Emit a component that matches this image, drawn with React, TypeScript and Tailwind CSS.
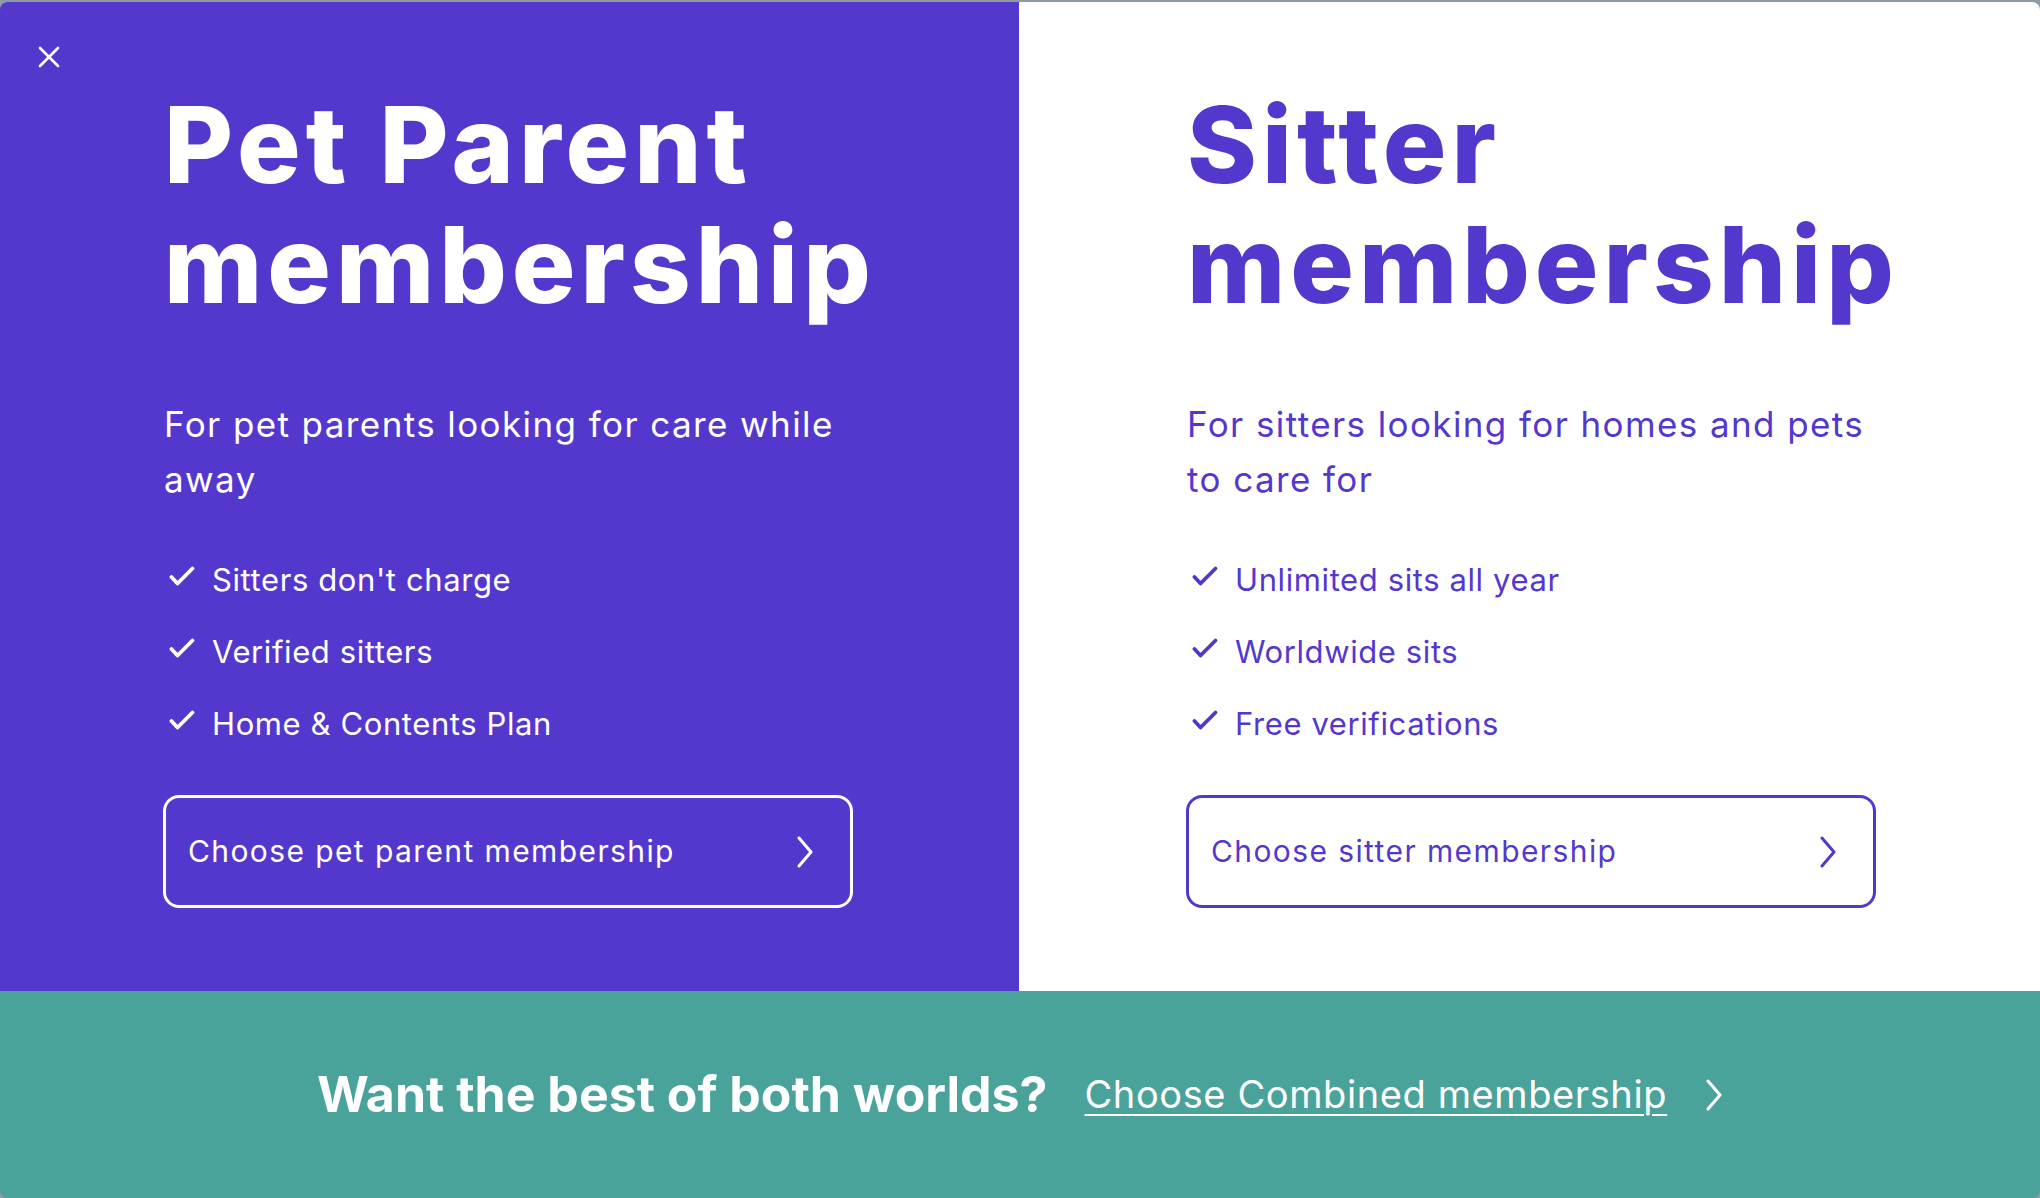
import React from "react";

const CheckIcon = ({ className }: { className?: string }) => (
  <svg
    viewBox="0 0 26 20"
    className={className}
    fill="none"
    stroke="currentColor"
    strokeWidth="3.8"
    strokeLinecap="round"
    strokeLinejoin="round"
  >
    <path d="M2.5 11 L8.5 17.5 L23.5 2.5" />
  </svg>
);

const Chevron = ({ className }: { className?: string }) => (
  <svg
    viewBox="0 0 18 32"
    className={className}
    fill="none"
    stroke="currentColor"
    strokeWidth="3"
    strokeLinecap="round"
    strokeLinejoin="round"
  >
    <path d="M3 2 L15 16 L3 30" />
  </svg>
);

const plans = [
  {
    title: ["Pet Parent", "membership"],
    lines: ["For pet parents looking for care while", "away"],
    perks: ["Sitters don't charge", "Verified sitters", "Home & Contents Plan"],
    cta: "Choose pet parent membership",
    dark: true,
  },
  {
    title: ["Sitter", "membership"],
    lines: ["For sitters looking for homes and pets", "to care for"],
    perks: ["Unlimited sits all year", "Worldwide sits", "Free verifications"],
    cta: "Choose sitter membership",
    dark: false,
  },
];

const App = () => {
  return (
    <div className="w-[2040px] h-[1198px] bg-[#8e9ba3] pt-[2px] font-['Inter','Noto_Sans',sans-serif]">
      <div className="h-full rounded-lg overflow-hidden flex flex-col">
        <div className="flex h-[989px]">
          {plans.map((plan) => (
            <section
              key={plan.cta}
              className={
                plan.dark
                  ? "relative w-[1019px] bg-[#5438cd] text-white pl-[164px] pt-[83px]"
                  : "relative flex-1 bg-white text-[#5438cd] pl-[168px] pt-[83px]"
              }
            >
              {plan.dark && (
                <button className="absolute left-[38px] top-[44px] w-[22px] h-[22px] text-white">
                  <svg viewBox="0 0 22 22" className="w-[22px] h-[22px]" stroke="currentColor" strokeWidth="2.6" strokeLinecap="round">
                    <path d="M2 2 L20 20 M20 2 L2 20" />
                  </svg>
                </button>
              )}
              <h1 className="text-[106px] leading-[120px] font-extrabold tracking-[5px]">
                {plan.title[0]}
                <br />
                {plan.title[1]}
              </h1>
              <p className="mt-[72px] text-[35px] leading-[55px] tracking-[1.4px]">
                {plan.lines[0]}
                <br />
                {plan.lines[1]}
              </p>
              <ul className="mt-[53px] flex flex-col gap-[32px]">
                {plan.perks.map((perk) => (
                  <li key={perk} className="flex items-center gap-[17px] text-[31px] leading-[40px] tracking-[0.6px]">
                    <CheckIcon className="w-[26px] h-[20px] -mt-[8px] ml-[5px]" />
                    <span>{perk}</span>
                  </li>
                ))}
              </ul>
              <a
                href="#"
                className={
                  plan.dark
                    ? "mt-[51px] -ml-[1px] w-[690px] h-[113px] border-[3px] border-white rounded-[16px] flex items-center justify-between pl-[22px] pr-[36px] text-[30px] tracking-[1.4px]"
                    : "mt-[51px] -ml-[1px] w-[690px] h-[113px] border-[3px] border-[#5438cd] rounded-[16px] flex items-center justify-between pl-[22px] pr-[36px] text-[30px] tracking-[1.4px]"
                }
              >
                <span>{plan.cta}</span>
                <Chevron className="w-[18px] h-[32px]" />
              </a>
            </section>
          ))}
        </div>
        <div className="flex-1 bg-[#4aa39a] text-white flex items-center justify-center">
          <h2 className="text-[50px] font-bold">Want the best of both worlds?</h2>
          <a href="#" className="ml-[37px] text-[38px] tracking-[0.6px] underline underline-offset-[6px] decoration-2">
            Choose Combined membership
          </a>
          <Chevron className="ml-[38px] w-[18px] h-[32px]" />
        </div>
      </div>
    </div>
  );
};

export default App;
